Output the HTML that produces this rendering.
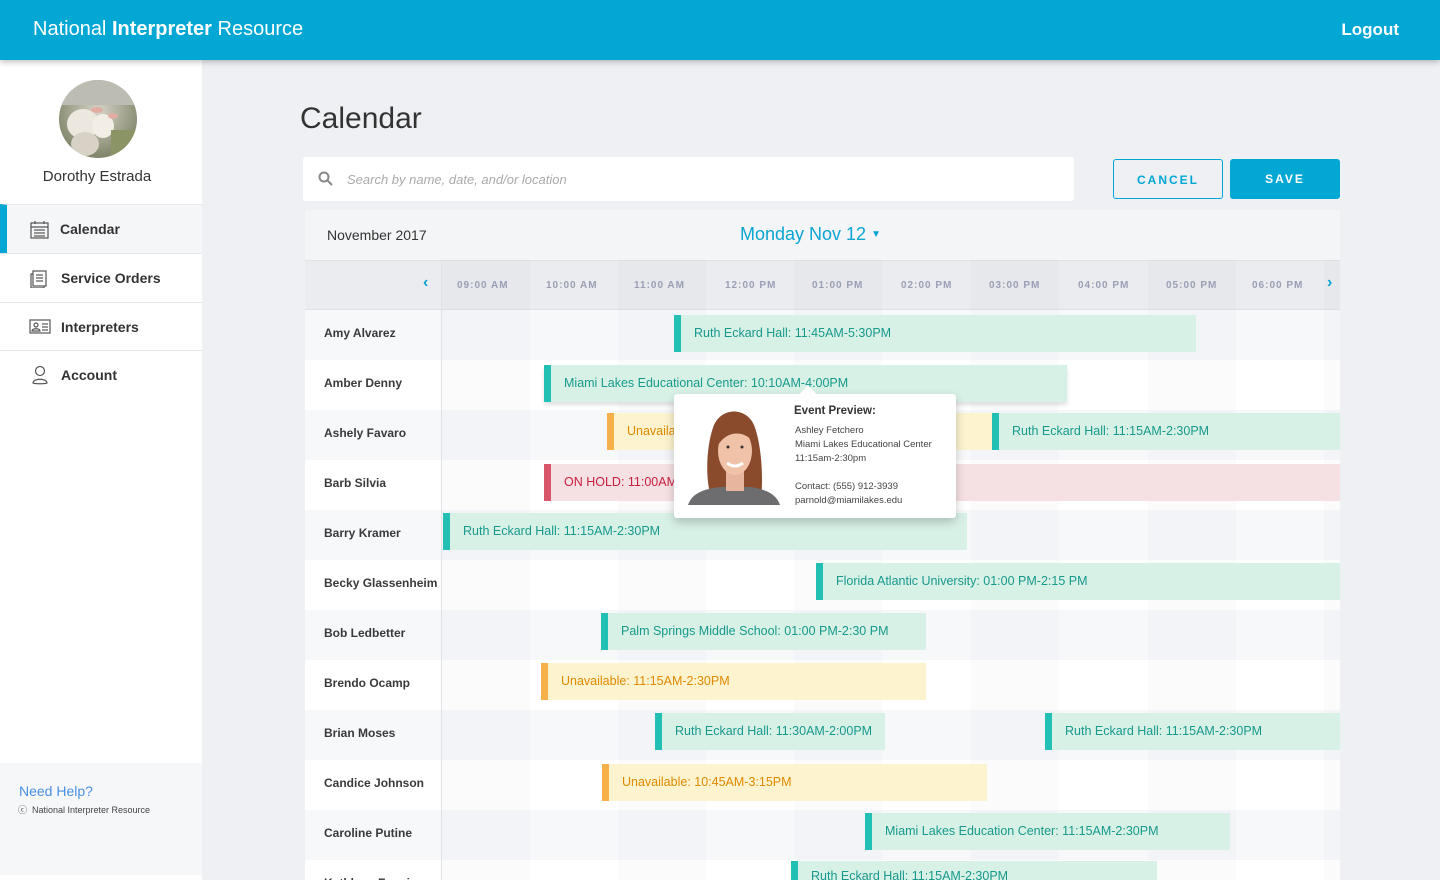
<!DOCTYPE html>
<html><head><meta charset="utf-8"><style>
*{margin:0;padding:0;box-sizing:border-box}
body{width:1440px;height:880px;overflow:hidden;background:#eef0f4;font-family:"Liberation Sans",sans-serif;position:relative}
.top{position:absolute;left:0;top:0;width:1440px;height:60px;background:#02a7d4;box-shadow:0 2px 6px rgba(0,0,0,.25);z-index:5;color:#fff}
.top .t{position:absolute;left:33px;top:18px;font-size:20px}
.top .l{position:absolute;right:41px;top:20px;font-size:17px;font-weight:bold}
.side{position:absolute;left:0;top:60px;width:202px;height:820px;background:#fff}
.av{position:absolute;left:59px;top:20px;width:78px;height:78px;border-radius:50%;overflow:hidden}
.nm{position:absolute;top:108px;width:194px;text-align:center;font-size:15px;color:#333}
.nav{position:absolute;left:0;width:202px;height:49px;border-top:1px solid #e6e7ea;font-size:14px;color:#333;font-weight:bold}
.nav span{position:absolute;left:61px;top:16px}
.nav svg{position:absolute;left:30px;top:16px}
.help{position:absolute;left:0;top:703px;width:202px;height:112px;background:#f6f7f9}
.search{position:absolute;left:303px;top:157px;width:771px;height:44px;background:#fff;border-radius:3px}
.search span{position:absolute;left:44px;top:15px;font-size:13px;font-style:italic;color:#aaa}
.btn{position:absolute;top:159px;height:40px;border-radius:3px;font-size:12px;font-weight:bold;letter-spacing:2px;text-align:center;line-height:40px}
.card{position:absolute;left:305px;top:210px;width:1035px;height:670px;background:#fff;overflow:hidden;border-radius:3px 3px 0 0}
.row{position:absolute;left:0;width:1035px;height:50px}
.row .n{position:absolute;left:19px;top:16px;font-size:12px;color:#3a3a3a;font-weight:bold}
.ev{position:absolute;height:37px;font-size:12.5px;line-height:37px;padding-left:13px;white-space:nowrap;overflow:hidden}
.ev.t{background:#d8f1e7;color:#17998b;border-left:7px solid #22bfb4}
.ev.o{background:#fdf3cf;color:#e08a00;border-left:7px solid #f5b04a}
.ev.r{background:#f5e0e3;color:#c8203f;border-left:7px solid #d9566a}
.th{position:absolute;top:20px;font-size:10px;font-weight:bold;color:#9a9fb3;letter-spacing:1px}
.sh{position:absolute;top:50px;width:88px;height:620px;background:rgba(0,0,40,.014)}
</style></head><body>
<div class="top"><div class="t">National <b>Interpreter</b> Resource</div><div class="l">Logout</div></div>
<div class="side">
<div class="av"><svg width="78" height="78"><defs><radialGradient id="g" cx="50%" cy="40%" r="70%"><stop offset="0" stop-color="#d8d4ca"/><stop offset="1" stop-color="#6f7656"/></radialGradient></defs><rect width="78" height="78" fill="url(#g)"/><rect width="78" height="25" fill="#bcbcb2"/><ellipse cx="24" cy="44" rx="16" ry="15" fill="#ece8e0"/><ellipse cx="44" cy="46" rx="11" ry="12" fill="#f2eee6"/><ellipse cx="26" cy="64" rx="14" ry="12" fill="#d8d2c6"/><ellipse cx="38" cy="30" rx="6" ry="3" fill="#e2aea4"/><ellipse cx="54" cy="36" rx="5" ry="3" fill="#e2aea4"/><rect x="52" y="50" width="26" height="28" fill="#8a9464"/></svg></div>
<div class="nm">Dorothy Estrada</div>
<div class="nav" style="top:144px;background:#f5f6f8;border-left:7px solid #02a7d4"><svg width="20" height="18" style="left:23px" fill="none" stroke="#555" stroke-width="1.2"><rect x="1" y="2" width="17" height="15"/><line x1="1" y1="6" x2="18" y2="6"/><line x1="5" y1="0" x2="5" y2="3"/><line x1="14" y1="0" x2="14" y2="3"/><line x1="4" y1="9" x2="15" y2="9"/><line x1="4" y1="12" x2="15" y2="12"/><line x1="4" y1="15" x2="15" y2="15"/></svg><span style="left:53px">Calendar</span></div>
<div class="nav" style="top:193px"><svg width="18" height="18" fill="none" stroke="#555" stroke-width="1.2"><rect x="3" y="1" width="13" height="15"/><path d="M3 4H1v14h13v-2"/><line x1="6" y1="5" x2="13" y2="5"/><line x1="6" y1="8" x2="13" y2="8"/><line x1="6" y1="11" x2="13" y2="11"/></svg><span>Service Orders</span></div>
<div class="nav" style="top:242px"><svg width="22" height="16" style="left:29px" fill="none" stroke="#555" stroke-width="1.2"><rect x="1" y="1" width="20" height="13"/><circle cx="7" cy="6" r="2"/><path d="M3 12c0-3 8-3 8 0z"/><line x1="13" y1="5" x2="19" y2="5"/><line x1="13" y1="8" x2="19" y2="8"/><line x1="13" y1="11" x2="19" y2="11"/></svg><span>Interpreters</span></div>
<div class="nav" style="top:290px;height:1px"></div>
<div class="nav" style="top:291px;border:none"><svg width="18" height="20" style="left:32px;top:14px" fill="none" stroke="#555" stroke-width="1.2"><circle cx="8" cy="6" r="4.5"/><path d="M1 18c0-5 14-5 14 0c0 1-14 1-14 0z"/></svg><span>Account</span></div>
<div class="help"><div style="position:absolute;left:19px;top:20px;font-size:14px;color:#4a90e2">Need Help?</div><div style="position:absolute;left:18px;top:40px;font-size:9px;color:#444">&#9426;&nbsp; National Interpreter Resource</div></div>
</div>
<div style="position:absolute;left:300px;top:102px;font-size:30px;color:#333">Calendar</div>
<div class="search"><svg width="16" height="16" style="position:absolute;left:15px;top:14px" fill="none" stroke="#888" stroke-width="2"><circle cx="6" cy="6" r="4.5"/><line x1="9.5" y1="9.5" x2="14" y2="14"/></svg><span>Search by name, date, and/or location</span></div>
<div class="btn" style="left:1113px;width:110px;border:1px solid #02a7d4;color:#02a7d4">CANCEL</div>
<div class="btn" style="left:1230px;width:110px;background:#02a7d4;color:#fff">SAVE</div>
<div class="card">
<div style="position:absolute;left:0;top:0;width:1035px;height:50px;background:#f4f5f7"></div>
<div style="position:absolute;left:22px;top:17px;font-size:14px;color:#333">November 2017</div>
<div style="position:absolute;left:435px;top:14px;font-size:18px;color:#0aa5d2">Monday Nov 12 <span style="font-size:10px;vertical-align:3px">&#9660;</span></div>
<div style="position:absolute;left:0;top:50px;width:1035px;height:50px;background:#ebecef;border-top:1px solid #e1e2e6;border-bottom:1px solid #e1e2e6"></div>
<div style="position:absolute;left:0;top:100px;width:1035px;height:570px">
<div class="row" style="top:0;background:#f7f8fa"></div><div class="row" style="top:50px;background:#fff"></div><div class="row" style="top:100px;background:#f7f8fa"></div><div class="row" style="top:150px;background:#fff"></div><div class="row" style="top:200px;background:#f7f8fa"></div><div class="row" style="top:250px;background:#fff"></div><div class="row" style="top:300px;background:#f7f8fa"></div><div class="row" style="top:350px;background:#fff"></div><div class="row" style="top:400px;background:#f7f8fa"></div><div class="row" style="top:450px;background:#fff"></div><div class="row" style="top:500px;background:#f7f8fa"></div><div class="row" style="top:550px;background:#fff"></div>
</div>
<div style="position:absolute;left:136px;top:50px;width:1px;height:620px;background:#e1e2e6"></div>
<div class="sh" style="left:137px"></div><div class="sh" style="left:313px"></div><div class="sh" style="left:489px"></div><div class="sh" style="left:666px"></div><div class="sh" style="left:843px"></div><div class="sh" style="left:1019px;width:16px"></div>
<div style="position:absolute;left:0;top:50px;width:1035px;height:50px">
<div style="position:absolute;left:118px;top:14px;color:#0aa5d2;font-size:16px;font-weight:bold">&#8249;</div>
<div class="th" style="left:152px">09:00 AM</div><div class="th" style="left:241px">10:00 AM</div><div class="th" style="left:329px">11:00 AM</div><div class="th" style="left:420px">12:00 PM</div><div class="th" style="left:507px">01:00 PM</div><div class="th" style="left:596px">02:00 PM</div><div class="th" style="left:684px">03:00 PM</div><div class="th" style="left:773px">04:00 PM</div><div class="th" style="left:861px">05:00 PM</div><div class="th" style="left:947px">06:00 PM</div>
<div style="position:absolute;left:1022px;top:14px;color:#0aa5d2;font-size:16px;font-weight:bold">&#8250;</div>
</div>
<div style="position:absolute;left:0;top:100px;width:1035px">
<div class="row" style="top:0"><div class="n">Amy Alvarez</div></div>
<div class="row" style="top:50px"><div class="n">Amber Denny</div></div>
<div class="row" style="top:100px"><div class="n">Ashely Favaro</div></div>
<div class="row" style="top:150px"><div class="n">Barb Silvia</div></div>
<div class="row" style="top:200px"><div class="n">Barry Kramer</div></div>
<div class="row" style="top:250px"><div class="n">Becky Glassenheim</div></div>
<div class="row" style="top:300px"><div class="n">Bob Ledbetter</div></div>
<div class="row" style="top:350px"><div class="n">Brendo Ocamp</div></div>
<div class="row" style="top:400px"><div class="n">Brian Moses</div></div>
<div class="row" style="top:450px"><div class="n">Candice Johnson</div></div>
<div class="row" style="top:500px"><div class="n">Caroline Putine</div></div>
<div class="row" style="top:550px"><div class="n">Kathleen Fennis</div></div>
</div>
<div class="ev t" style="left:369px;top:105px;width:522px">Ruth Eckard Hall: 11:45AM-5:30PM</div>
<div class="ev t" style="left:239px;top:155px;width:523px;box-shadow:0 3px 4px rgba(0,0,0,.12)">Miami Lakes Educational Center: 10:10AM-4:00PM</div>
<div class="ev o" style="left:302px;top:203px;width:385px">Unavailable: 11:15AM-2:30PM</div>
<div class="ev t" style="left:687px;top:203px;width:348px">Ruth Eckard Hall: 11:15AM-2:30PM</div>
<div class="ev r" style="left:239px;top:254px;width:796px">ON HOLD: 11:00AM-5:00PM</div>
<div class="ev t" style="left:138px;top:303px;width:524px">Ruth Eckard Hall: 11:15AM-2:30PM</div>
<div class="ev t" style="left:511px;top:353px;width:524px">Florida Atlantic University: 01:00 PM-2:15 PM</div>
<div class="ev t" style="left:296px;top:403px;width:325px">Palm Springs Middle School: 01:00 PM-2:30 PM</div>
<div class="ev o" style="left:236px;top:453px;width:385px">Unavailable: 11:15AM-2:30PM</div>
<div class="ev t" style="left:350px;top:503px;width:230px">Ruth Eckard Hall: 11:30AM-2:00PM</div>
<div class="ev t" style="left:740px;top:503px;width:295px">Ruth Eckard Hall: 11:15AM-2:30PM</div>
<div class="ev o" style="left:297px;top:554px;width:385px">Unavailable: 10:45AM-3:15PM</div>
<div class="ev t" style="left:560px;top:603px;width:365px">Miami Lakes Education Center: 11:15AM-2:30PM</div>
<div class="ev t" style="left:486px;top:651px;width:366px;line-height:30px">Ruth Eckard Hall: 11:15AM-2:30PM</div>
</div>
<div style="position:absolute;left:674px;top:394px;width:282px;height:124px;background:#fff;border-radius:3px;box-shadow:0 4px 10px rgba(0,0,0,.22);z-index:4">
<div style="position:absolute;left:128px;top:-6px;width:12px;height:12px;background:#fff;transform:rotate(45deg)"></div>
<svg width="100" height="100" style="position:absolute;left:10px;top:11px"><path d="M30 100C20 80 22 40 30 20C38 2 62 2 70 20C78 40 80 80 76 100Z" fill="#8a4a2c"/><path d="M4 100C8 88 20 84 36 82L66 82C80 84 92 88 96 100Z" fill="#6d6d70"/><rect x="42" y="66" width="18" height="20" fill="#e7b59d"/><ellipse cx="51" cy="46" rx="17" ry="24" fill="#f0c2a8"/><path d="M34 40C36 18 64 14 70 38C62 26 44 24 34 40Z" fill="#8a4a2c"/><path d="M43 58Q51 64 59 58" stroke="#fff" stroke-width="3" fill="none"/><circle cx="44" cy="42" r="1.5" fill="#333"/><circle cx="58" cy="42" r="1.5" fill="#333"/></svg>
<div style="position:absolute;left:120px;top:11px;font-size:11.5px;color:#333;font-weight:bold">Event Preview:</div>
<div style="position:absolute;left:121px;top:30px;font-size:9.5px;line-height:14px;color:#444">Ashley Fetchero<br>Miami Lakes Educational Center<br>11:15am-2:30pm<br><br>Contact: (555) 912-3939<br>parnold@miamilakes.edu</div>
</div>
</body></html>
